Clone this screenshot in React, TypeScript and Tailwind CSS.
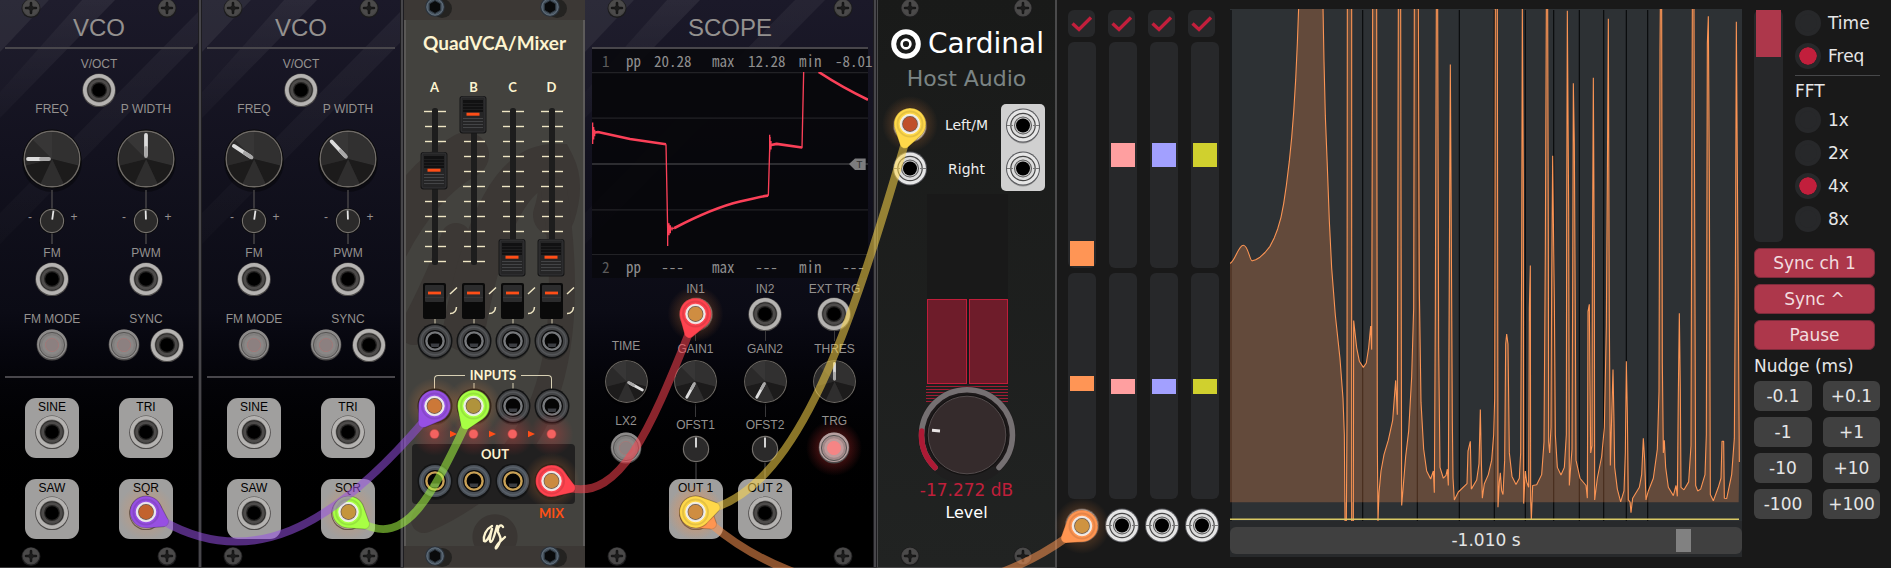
import React from "react";

/* ---------- shared hardware parts ---------- */

const Screw = () => (
  <svg width="20" height="20" viewBox="0 0 20 20" className="block shrink-0" aria-hidden="true">
    <circle cx="10" cy="10.5" r="9.5" fill="#1b1b1c" />
    <circle cx="10" cy="10" r="8.6" fill="#464545" />
    <circle cx="10" cy="9.6" r="7.6" fill="#4b4a4a" />
    <path d="M10 5v10M5 10h10" stroke="#161616" strokeWidth="2.6" strokeLinecap="round" />
    <circle cx="10" cy="10" r="2.6" fill="#1c1c1c" />
  </svg>
);

const Jack = () => (
  <svg width="34" height="34" viewBox="0 0 34 34" className="block shrink-0" aria-hidden="true">
    <circle cx="17" cy="17.4" r="16.8" fill="#4d4b4a" />
    <circle cx="17" cy="17" r="16" fill="#b5b3b1" />
    <circle cx="17" cy="17" r="12.4" fill="#787674" />
    <circle cx="17" cy="17" r="11.8" fill="#2a2928" />
    <circle cx="17" cy="17" r="10.8" fill="#4d4b4a" />
    <circle cx="17" cy="17" r="8" fill="#262524" />
    <circle cx="17" cy="17" r="6.8" fill="#000" />
  </svg>
);

const SilverJack = () => (
  <svg width="34" height="36" viewBox="0 0 34 36" className="block shrink-0" aria-hidden="true">
    <circle cx="17" cy="19.5" r="16" fill="#000" opacity=".28" />
    <circle cx="17" cy="17.5" r="17" fill="#55565a" />
    <circle cx="17" cy="17.5" r="16" fill="#e6e6e6" />
    <circle cx="17" cy="17.5" r="12.8" fill="#444" />
    <circle cx="17" cy="17.5" r="11.6" fill="#dcdcdc" />
    <path d="M1 17.5h6M27 17.5h6" stroke="#777" strokeWidth="1" />
    <circle cx="17" cy="17.5" r="9" fill="#555" />
    <circle cx="17" cy="17.5" r="8" fill="#c6c6c6" />
    <circle cx="17" cy="17.5" r="7" fill="#000" />
  </svg>
);

const MixJack = ({ gold, tick }: { gold?: boolean; tick?: boolean }) => (
  <svg width="36" height="36" viewBox="0 0 36 36" className="block overflow-visible" aria-hidden="true">
    {tick && <path d="M18 -5v6" stroke="#d8d0b4" strokeWidth="1" />}
    <circle cx="18" cy="20" r="17" fill="#000" opacity=".25" />
    <circle cx="18" cy="18" r="17.5" fill="#121314" />
    <circle cx="18" cy="18" r="16" fill={gold ? "#4a5058" : "#434446"} />
    <circle cx="18" cy="18" r="13.8" fill="none" stroke={gold ? "#59616a" : "#55575a"} strokeWidth="1.4" />
    <circle cx="18" cy="18" r="11" fill="#0c0c0d" />
    <circle cx="18" cy="18" r="8.6" fill="#050505" stroke={gold ? "#caa257" : "#77797c"} strokeWidth="2.4" />
    <path d="M13.5 20.5h9l-1 3.5h-7z" fill="#3b3d42" />
  </svg>
);

const WEDGES = [
  { d: "M0 0V-27A27 27 0 0 1 26 6.6Z", f: "#313030" },
  { d: "M0 0L26 6.6A27 27 0 0 1 11.5 24.4Z", f: "#1c1b1b" },
  { d: "M0 0L11.5 24.4A27 27 0 0 1 -11.5 24.4Z", f: "#2f2e2e" },
  { d: "M0 0L-11.5 24.4A27 27 0 0 1 -26 6.6Z", f: "#1c1b1b" },
  { d: "M0 0L-26 6.6A27 27 0 0 1 -19 -19Z", f: "#2b2a2a" },
  { d: "M0 0L-19 -19A27 27 0 0 1 0 -27Z", f: "#373636" },
];

const RangeOverlay = ({ name, vertical }: { name: string; vertical?: boolean }) => (
  <input
    type="range"
    aria-label={name}
    className={
      vertical
        ? "absolute inset-0 h-full w-full cursor-pointer opacity-0 [writing-mode:vertical-lr]"
        : "absolute inset-0 h-full w-full cursor-pointer opacity-0"
    }
  />
);

const Knob = ({ name, angle, size }: { name: string; angle: number; size: number }) => (
  <span className="relative block shrink-0">
    <svg width={size} height={size} viewBox="-30 -30 60 60" className="block overflow-visible" aria-hidden="true">
      <circle cx="0" cy="3" r="30" fill="#000" opacity=".35" />
      <circle r="29.4" fill="#080808" />
      <circle r="27.8" fill="#262525" stroke="#6e6a66" strokeWidth="1.4" />
      {WEDGES.map((w) => (
        <path key={w.d} d={w.d} fill={w.f} />
      ))}
      <g transform={`rotate(${angle})`}>
        <path d="M0 -24V-4.5" stroke="#dcdcdc" strokeWidth="3.8" strokeLinecap="round" />
        <path d="M0 -11V-3" stroke="#a9a8a8" strokeWidth="3.8" strokeLinecap="round" />
      </g>
    </svg>
    <RangeOverlay name={name} />
  </span>
);

const SmallDial = ({ angle, r, cy }: { angle: number; r: number; cy: number }) => (
  <g transform={`translate(14 ${cy})`}>
    <circle r={r + 0.8} fill="#0a0a0a" />
    <circle r={r - 0.4} fill="#2b2a2a" stroke="#76726e" strokeWidth="1.1" />
    <path d={`M0 ${-r + 1.5}V-1.5`} stroke="#e6e6e6" strokeWidth="1.8" transform={`rotate(${angle})`} />
  </g>
);

const RoundButton = ({ name, lit }: { name: string; lit?: boolean }) => (
  <button type="button" aria-label={name} className="block shrink-0 cursor-pointer">
    <svg width="32" height="32" viewBox="0 0 32 32" className="block overflow-visible" aria-hidden="true">
      {lit && <circle cx="16" cy="16" r="28" fill="url(#redGlow)" />}
      <circle cx="16" cy="16" r="15.4" fill="#4c4a4a" />
      <circle cx="16" cy="15.2" r="14.8" fill={lit ? "#b7a0a0" : "#8d8b8a"} />
      <circle cx="16" cy="16" r="12.6" fill={lit ? "#a08888" : "#807e7d"} stroke="#565453" strokeWidth="1" />
      <circle cx="16" cy="16" r="9.8" fill={lit ? "#bd9b9b" : "#8a8786"} />
      <circle cx="16" cy="16" r="6.6" fill={lit ? "#f58585" : "#8c8080"} stroke={lit ? "#f58585" : "#a07a79"} strokeWidth="1" />
    </svg>
  </button>
);

const Label = ({ children }: { children: React.ReactNode }) => (
  <span className="block h-4 text-center text-[12px] leading-4 whitespace-nowrap">{children}</span>
);

const Plate = ({ label }: { label: string }) => (
  <div className="flex h-[60px] w-[54px] flex-col items-center rounded-[11px] bg-[#a09f9e] pt-px">
    <span className="h-4 text-[12px] leading-4 whitespace-nowrap text-black">{label}</span>
    <Jack />
  </div>
);

const Stripes = () => (
  <svg className="pointer-events-none absolute inset-0 h-full w-full" aria-hidden="true">
    <defs>
      <linearGradient id="fadeDown" x1="0" y1="0" x2="0" y2="1">
        <stop offset="0" stopColor="#fff" stopOpacity=".07" />
        <stop offset="1" stopColor="#fff" stopOpacity=".02" />
      </linearGradient>
    </defs>
    <path d="M0 0H49L0 52Z" fill="#fff" opacity=".08" />
    <path d="M82 0H115L0 118V92Z" fill="url(#fadeDown)" />
    <path d="M82 0H49L0 52V92Z" fill="#fff" opacity=".02" />
    <path d="M210 0H240L0 244V213Z" fill="url(#fadeDown)" opacity=".7" />
  </svg>
);

const ScrewRow = ({ bottom }: { bottom?: boolean }) => (
  <div className={bottom ? "mt-auto flex h-[21px] items-start justify-between" : "flex h-[18px] items-end justify-between"}>
    <Screw />
    <Screw />
  </div>
);

/* ---------- VCO ---------- */

const Attenuator = ({ name, angle }: { name: string; angle: number }) => (
  <div className="flex justify-center gap-1 text-[12px]">
    <span className="mt-[19px] w-2 text-center leading-4">-</span>
    <span className="relative block">
      <svg width="28" height="54" viewBox="0 0 28 54" className="block" aria-hidden="true">
        <path d="M14 0v54" stroke="#4a4849" strokeWidth="1.4" />
        <SmallDial angle={angle} r={12} cy={31} />
      </svg>
      <RangeOverlay name={name} />
    </span>
    <span className="mt-[19px] w-2 text-center leading-4">+</span>
  </div>
);

const Vco = ({ freq, width }: { freq: number; width: number }) => (
  <section className="relative flex w-[202px] shrink-0 flex-col overflow-hidden border-b border-[#39383a] bg-linear-to-b from-[#1b1929] via-[#0b0b15] via-55% to-black to-95% font-['Liberation_Sans',sans-serif] text-[#94918f]">
    <Stripes />
    <div className="pointer-events-none absolute inset-y-0 right-0 w-[4px] border-x border-[#1d1c20] bg-[#47464a]" />
    <div className="relative flex grow flex-col pr-[9px] pl-[5px]">
      <div className="px-4"><ScrewRow /></div>
      <h2 className="h-5 text-center text-[24px] leading-5">VCO</h2>
      <div className="mt-[9px] h-[2px] bg-[#48464b]" />
      <div className="mt-[7px] flex flex-col items-center gap-px">
        <Label>V/OCT</Label>
        <Jack />
      </div>
      <div className="-mt-[6px] grid grid-cols-2 justify-items-center">
        <Label>FREQ</Label>
        <Label>P WIDTH</Label>
      </div>
      <div className="mt-3 grid grid-cols-2 justify-items-center">
        <Knob name="Frequency" angle={freq} size={60} />
        <Knob name="Pulse width" angle={width} size={60} />
      </div>
      <div className="mt-px grid grid-cols-2">
        <Attenuator name="FM amount" angle={8} />
        <Attenuator name="PWM amount" angle={-2} />
      </div>
      <div className="mt-px grid grid-cols-2 justify-items-center gap-y-px">
        <Label>FM</Label>
        <Label>PWM</Label>
        <Jack />
        <Jack />
      </div>
      <div className="mt-[15px] grid grid-cols-2 items-center justify-items-center gap-y-px">
        <Label>FM MODE</Label>
        <Label>SYNC</Label>
        <RoundButton name="FM mode" />
        <div className="flex items-center gap-[10px]">
          <RoundButton name="Sync mode" />
          <Jack />
        </div>
      </div>
      <div className="mt-[14px] h-[2px] bg-[#48464b]" />
      <div className="mt-5 grid grid-cols-2 justify-items-center gap-y-[21px]">
        <Plate label="SINE" />
        <Plate label="TRI" />
        <Plate label="SAW" />
        <Plate label="SQR" />
      </div>
      <div className="mt-auto px-4"><ScrewRow bottom /></div>
    </div>
  </section>
);

/* ---------- Quad VCA / Mixer ---------- */

const HexScrew = () => (
  <svg width="38" height="20" viewBox="-12 -10 38 20" className="block shrink-0 overflow-visible" aria-hidden="true">
    <ellipse cx="7" cy="1.5" rx="10" ry="9.5" fill="#242321" />
    <circle r="9.8" fill="#2b333c" />
    <circle r="8.2" fill="#4a5763" stroke="#64727f" strokeWidth="1" />
    <path d="M0 -6.4L5.6 -3.2V3.2L0 6.4L-5.6 3.2V-3.2Z" fill="#090a0b" stroke="#2c353e" strokeWidth="1" />
  </svg>
);

const FADER_TICKS = [0, 1, 2, 3, 4, 5, 6, 7, 8, 9, 10];

const MixFader = ({ name, capTop }: { name: string; capTop: number }) => (
  <div className="relative h-[181px]">
    <svg width="39" height="181" viewBox="0 0 39 181" className="block overflow-visible" aria-hidden="true">
      {FADER_TICKS.map((i) => (
        <path key={i} d={`M${i % 5 === 0 ? 9 : 10} ${15.5 + i * 15}h${i % 5 === 0 ? 22 : 21}`} stroke="#efe6c4" strokeWidth="1.4" />
      ))}
      <rect x="17" y="12" width="6" height="157" rx="2.5" fill="#1d1d1d" />
      <g transform={`translate(6 ${capTop})`}>
        <rect x="-.5" y="0" width="27" height="37.5" rx="3" fill="#161617" />
        <rect x="1" y="1" width="24" height="35" rx="2" fill="#252526" stroke="#39393b" strokeWidth=".8" />
        <rect x="3" y="4" width="20" height="12" fill="#111112" />
        <path d="M3 7.5h20M3 10.5h20M3 13.5h20" stroke="#1e1e1f" />
        <path d="M3 22.5h20M3 25.5h20M3 28.5h20M3 31.5h20" stroke="#434446" strokeWidth="1" />
        <rect x="6.5" y="16.7" width="13" height="3" fill="#ff4e17" />
      </g>
    </svg>
    <RangeOverlay name={name} vertical />
  </div>
);

const CurveSwitch = ({ name }: { name: string }) => (
  <button type="button" aria-label={name} className="block h-[48px] cursor-pointer">
    <svg width="39" height="48" viewBox="0 0 39 48" className="block overflow-visible" aria-hidden="true">
      <path d="M20 42v7" stroke="#d8d0b4" strokeWidth="1" />
      <rect x="8" y="6" width="23" height="36" rx="2" fill="#0a0a0a" />
      <rect x="10" y="8" width="19" height="17" rx="1" fill="#2c2c2d" />
      <path d="M10 20.5h19" stroke="#363637" />
      <rect x="13" y="14.6" width="13" height="2.8" fill="#ff4e17" />
      <path d="M35 17l7-6.5M35 36.5q6 .2 6.500-6.500" stroke="#efe6c4" strokeWidth="1.5" fill="none" />
    </svg>
  </button>
);

const Led = ({ arrow }: { arrow?: boolean }) => (
  <svg width="39" height="20" viewBox="0 0 39 20" className="block overflow-visible" aria-hidden="true">
    <circle cx="19.5" cy="10" r="22" fill="url(#redGlow)" opacity=".6" />
    <circle cx="19.5" cy="10" r="4.6" fill="#f46260" stroke="#b04442" strokeWidth=".6" />
    {arrow && <path d="M35 6.8L42 10L35 13.2Z" fill="#ff4e17" />}
  </svg>
);

const CHANNELS = [
  { name: "A", cap: 56 },
  { name: "B", cap: 0 },
  { name: "C", cap: 143 },
  { name: "D", cap: 143 },
];

const Mixer = () => (
  <section className="relative flex w-[181px] shrink-0 flex-col overflow-hidden border-b border-[#5a5652] bg-[#43423e] font-['Lato',sans-serif] font-bold text-[#fdf4d0]">
    <svg className="pointer-events-none absolute inset-0 h-full w-full" aria-hidden="true">
      <path d="M62 155Q8 185 -30 270" stroke="#3c3835" strokeWidth="46" fill="none" strokeLinecap="round" />
      <path d="M52 238Q32 290 10 330" stroke="#3c3835" strokeWidth="30" fill="none" strokeLinecap="round" />
      <path d="M60 330Q90 165 150 165Q160 185 150 215" stroke="#3c3835" strokeWidth="42" fill="none" strokeLinecap="round" />
      <path d="M150 190Q170 320 140 400T20 520" stroke="#3c3835" strokeWidth="26" fill="none" strokeLinecap="round" />
    </svg>
    <div className="pointer-events-none absolute inset-y-0 left-0 w-[2px] bg-[#5a5856]" />
    <div className="pointer-events-none absolute inset-y-0 right-0 w-[2px] bg-[#5d5b5a]" />
    <div className="relative flex h-5 justify-between bg-[#3c3835] pr-[9px] pl-[19px]">
      <div className="-mt-[3px]"><HexScrew /></div>
      <div className="-mt-[3px]"><HexScrew /></div>
    </div>
    <h2 className="relative mt-[11px] h-6 text-center text-[19px] leading-6">QuadVCA/Mixer</h2>
    <div className="relative mt-6 grid grid-cols-[repeat(4,39px)] pl-[11px] text-center text-[13px] leading-4">
      {CHANNELS.map((c) => <span key={c.name}>{c.name}</span>)}
    </div>
    <div className="relative mt-px grid grid-cols-[repeat(4,39px)] pl-[11px]">
      {CHANNELS.map((c) => <MixFader key={c.name} name={`Level ${c.name}`} capTop={c.cap} />)}
    </div>
    <div className="relative grid grid-cols-[repeat(4,39px)] pl-[11px]">
      {CHANNELS.map((c) => <CurveSwitch key={c.name} name={`Response ${c.name}`} />)}
    </div>
    <div className="relative -mt-[2px] grid grid-cols-[repeat(4,39px)] justify-items-center pl-[11px]">
      {CHANNELS.map((c) => <MixJack key={c.name} />)}
    </div>
    <div className="relative mt-2 flex h-[21px] gap-[5px] pr-[33px] pl-[30px] text-[13px] leading-4">
      <span className="mt-2 h-[14px] grow rounded-tl border-t border-l border-[#d8d0b4]" />
      INPUTS
      <span className="mt-2 h-[14px] grow rounded-tr border-t border-r border-[#d8d0b4]" />
    </div>
    <div className="relative grid grid-cols-[repeat(4,39px)] justify-items-center pl-[11px]">
      <MixJack />
      <MixJack tick />
      <MixJack tick />
      <MixJack />
    </div>
    <div className="relative z-10 grid grid-cols-[repeat(4,39px)] pl-[11px]">
      <Led arrow />
      <Led arrow />
      <Led arrow />
      <Led />
    </div>
    <div className="relative ml-2 h-[60px] w-[163px] rounded-[4px] bg-[#212020] pt-[2px] pl-[3px]">
      <span className="block h-4 text-center text-[13px] leading-4">OUT</span>
      <div className="mt-px grid grid-cols-[repeat(4,39px)] justify-items-center">
        <MixJack gold />
        <MixJack gold />
        <MixJack gold />
        <MixJack gold />
      </div>
    </div>
    <div className="relative mt-px grid grid-cols-[repeat(4,39px)] pl-[11px] text-center text-[13px] leading-4 text-[#ff5014]">
      <span className="col-start-4">MIX</span>
    </div>
    <div className="relative z-10 mt-auto flex h-[25px] items-end justify-center">
      <svg width="46" height="31" viewBox="0 0 46 31" className="block overflow-visible" aria-label="as">
        <path d="M2.500 31A22.500 22.500 0 1 1 43.500 31Z" fill="#3a3633" />
        <path
          d="M20 11C14 14 11 21 12 26C14 28 18 21 20 14C18 21 17 27 19 27C21 27 23 18 25 11M31 12C29 8 25 12 26 17C28 21 30 24 27 29C25 33 23 35 24 32C26 28 30 25 33 22"
          stroke="#fdf4d0" strokeWidth="2.400" fill="none" strokeLinecap="round" strokeLinejoin="round"
        />
      </svg>
    </div>
    <div className="relative flex h-[21px] justify-between bg-[#3c3835] pr-[9px] pl-[19px]">
      <HexScrew />
      <HexScrew />
    </div>
  </section>
);

/* ---------- Scope ---------- */

const Readout = ({ ch, pp, max, min }: { ch: string; pp: string; max: string; min: string }) => (
  <div className="grid h-[23px] grid-cols-[24px_28px_58px_36px_51px_36px_35px] items-center pl-[10px] font-['Noto_Sans_Mono_CJK_JP','Noto_Sans_Mono_CJK_SC','Liberation_Mono',monospace] text-[15px] leading-4 text-[#8f8e8e]">
    <span className="text-[#5c5b5c]">{ch}</span>
    <span>pp</span>
    <span className="w-[37px] text-center">{pp}</span>
    <span>max</span>
    <span className="w-[37px] text-center">{max}</span>
    <span>min</span>
    <span className="w-[37px] text-center">{min}</span>
  </div>
);

const ScopeKnob = ({ name, angle }: { name: string; angle: number }) => <Knob name={name} angle={angle} size={45} />;

const OffsetKnob = ({ name }: { name: string }) => (
  <span className="relative block">
    <svg width="28" height="46" viewBox="0 0 28 46" className="block" aria-hidden="true">
      <path d="M14 30v16" stroke="#3a393b" strokeWidth="1.4" />
      <SmallDial angle={0} r={13} cy={16} />
    </svg>
    <RangeOverlay name={name} />
  </span>
);

const Scope = () => (
  <section className="relative flex w-[292px] shrink-0 flex-col overflow-hidden border-b border-[#39383a] bg-linear-to-b from-[#1b1929] via-[#0b0b15] via-55% to-black to-95% font-['Liberation_Sans',sans-serif] text-[#94918f]">
    <Stripes />
    <div className="pointer-events-none absolute inset-y-0 right-0 w-[4px] border-x border-[#1d1c20] bg-[#47464a]" />
    <div className="relative flex grow flex-col">
      <div className="pr-[24px] pl-[22px]"><ScrewRow /></div>
      <h2 className="h-5 pr-[2px] text-center text-[24px] leading-5">SCOPE</h2>
      <div className="mt-[9px] ml-[7px] w-[276px] border-t-2 border-[#48464b] bg-[#09090d]/90">
        <Readout ch="1" pp="20.28" max="12.28" min="-8.01" />
        <svg viewBox="36 213 828 555" preserveAspectRatio="none" className="block h-[183px] w-full bg-[#06060a]/60">
          <path d="M36 215H864M36 353H864M36 492H864M36 631H864M36 767H864" stroke="#222226" strokeWidth="4" />
          <path d="M36 492H864" stroke="#353538" strokeWidth="4" />
          <g stroke="#fb4058" fill="none" strokeLinejoin="round">
            <path d="M38 366V431M41 380V418M44 388V408M263 670V741M267 672V708M271 678V702M276 682V694M569 403V455M573 422V448" strokeWidth="4" />
            <path d="M38 398L54 395L150 416L258 432M282 687Q400 625 480 606T565 588M570 435L590 431L666 442M716 213Q790 262 864 297" strokeWidth="8" />
            <path d="M258 432L263 690L282 687M565 588L570 410M666 444L671 213" strokeWidth="4" />
          </g>
          <path d="M807 492L825 475H857V510H825Z" fill="#7c7c7e" />
          <text x="829" y="503" fontSize="32" fill="#333" fontFamily="Liberation Mono, monospace">T</text>
        </svg>
        <Readout ch="2" pp="---" max="---" min="---" />
      </div>
      <div className="mt-[3px] grid grid-cols-[70px_69px_70px_69px] justify-items-center pl-[6px]">
        <div className="flex flex-col items-center pt-[57px]">
          <span className="text-[12px] leading-4">TIME</span>
          <div className="mt-[5px]"><ScopeKnob name="Time" angle={118} /></div>
          <span className="mt-[9px] text-[12px] leading-4">LX2</span>
          <div className="mt-[3px]"><RoundButton name="LX2" /></div>
        </div>
        {[1, 2].map((n) => (
          <div key={n} className="flex flex-col items-center">
            <Label>IN{n}</Label>
            <Jack />
            <span className="h-[10px] w-px bg-[#3a393b]" />
            <Label>GAIN{n}</Label>
            <div className="mt-[2px]"><ScopeKnob name={`Gain ${n}`} angle={209} /></div>
            <span className="h-[13px] w-px bg-[#3a393b]" />
            <Label>OFST{n}</Label>
            <OffsetKnob name={`Offset ${n}`} />
            <Plate label={`OUT ${n}`} />
          </div>
        ))}
        <div className="flex flex-col items-center">
          <Label>EXT TRG</Label>
          <Jack />
          <span className="h-[10px] w-px bg-[#3a393b]" />
          <Label>THRES</Label>
          <div className="mt-[2px]"><ScopeKnob name="Threshold" angle={0} /></div>
          <span className="mt-[9px] text-[12px] leading-4">TRG</span>
          <div className="mt-[3px]"><RoundButton name="Trigger" lit /></div>
        </div>
      </div>
      <div className="mt-auto pr-[24px] pl-[22px]"><ScrewRow bottom /></div>
    </div>
  </section>
);

/* ---------- Host audio ---------- */

const LevelKnob = () => (
  <div className="relative">
    <svg width="100" height="98" viewBox="0 0 100 98" className="block" aria-hidden="true">
      <path
        d="M9 2.5h82M9 5.5h82M9 8.5h82M9 11.5h82M9 14.5h82M9 17.5h82"
        stroke="#a01c34" strokeWidth="1.2"
      />
      <circle cx="50" cy="51" r="49" fill="#201b1c" opacity=".45" />
      <path d="M17 83A46 46 0 1 1 83 83Z" fill="#1d191a" />
      <path d="M18 83.5A45.5 45.5 0 1 1 82 83.5" stroke="#757072" strokeWidth="5.5" fill="none" strokeLinecap="round" />
      <path d="M18 83.5A45.5 45.5 0 0 1 4.7 47" stroke="#ad1a35" strokeWidth="5.5" fill="none" strokeLinecap="round" />
      <circle cx="50" cy="51" r="40.5" fill="#151313" />
      <circle cx="50" cy="51" r="38.8" fill="#352b2c" stroke="#544c4d" strokeWidth="1" />
      <path d="M15 46.3l8 .7" stroke="#e8e4e4" strokeWidth="3" />
    </svg>
    <RangeOverlay name="Level" />
  </div>
);

const HostAudio = () => (
  <section className="relative flex w-[180px] shrink-0 flex-col overflow-hidden border-r-2 border-b border-l border-[#4a4a4b] bg-linear-to-b from-[#191a19] to-[#212322] font-['DejaVu_Sans',sans-serif]">
    <div className="pr-[22px] pl-[22px]"><ScrewRow /></div>
    <div className="mt-[9px] flex h-[34px] items-center pl-[13px]">
      <svg width="30" height="30" viewBox="0 0 30 30" className="block shrink-0" aria-hidden="true">
        <circle cx="15" cy="15" r="12.3" fill="none" stroke="#fff" strokeWidth="5" />
        <circle cx="15" cy="15" r="4.4" fill="none" stroke="#fff" strokeWidth="2.6" />
      </svg>
      <h2 className="ml-[7px] text-[28px] leading-[34px] text-white">Cardinal</h2>
    </div>
    <p className="mt-[5px] text-center text-[22px] leading-[26px] text-[#7b8484]">Host Audio</p>
    <div className="mt-3 flex h-[87px] text-[14px] text-[#ededed]">
      <div className="flex w-[49px] flex-col justify-around pl-[15px]">
        <SilverJack />
        <SilverJack />
      </div>
      <div className="flex w-[74px] flex-col justify-around pl-[5px] text-center">
        <span>Left/M</span>
        <span>Right</span>
      </div>
      <div className="flex w-[44px] flex-col items-center justify-around rounded-[5px] bg-[#d0d0d0]">
        <SilverJack />
        <SilverJack />
      </div>
    </div>
    <div className="mt-[3px] ml-[49px] w-[81px] bg-[#191919] pt-[105px]">
      <div className="grid grid-cols-2 gap-[2px]">
        <span className="h-[85px] border border-[#c01d3a] bg-[#6e1c2a]" />
        <span className="h-[85px] border border-[#c01d3a] bg-[#6e1c2a]" />
      </div>
    </div>
    <div className="ml-[39px]"><LevelKnob /></div>
    <p className="-mt-[2px] text-center text-[17px] leading-5 text-[#c01f3b]">-17.272 dB</p>
    <p className="mt-[3px] text-center text-[16px] leading-5 text-white">Level</p>
    <div className="mt-auto pr-[22px] pl-[22px]"><ScrewRow bottom /></div>
  </section>
);

/* ---------- Analyser ---------- */

const TRACE_POINTS: number[][] = [
  [82, 720], [92, 717], [105, 710], [120, 697], [135, 680], [148, 656], [158, 632], [168, 600], [176, 562], [184, 512], [193, 445],
  [200, 380], [206, 310], [212, 220], [217, 120], [221, 20], [294, 20], [297, 170], [301, 320], [307, 460], [313, 610],
  [320, 740], [331, 870], [345, 990], [354, 1100], [358, 1200], [360, 1438], [364, 1438], [366, 1162], [367, 20], [380, 20],
  [380, 1438], [385, 1438], [386, 885], [389, 910], [395, 960], [403, 997], [415, 1014], [424, 1002], [431, 960], [437, 900],
  [440, 965], [443, 20], [455, 20], [457, 1230], [459, 1438], [462, 1360], [468, 1300], [477, 1255], [490, 1215], [503, 1160], [512, 1050],
  [517, 1145], [520, 20], [527, 20], [530, 1395], [535, 1340], [542, 1260], [551, 1190], [560, 1040], [566, 850], [568, 20],
  [580, 20], [583, 800], [588, 1110], [596, 1240], [605, 1300], [617, 1322], [625, 1300], [628, 1360], [631, 850], [634, 20],
  [638, 20], [641, 960], [645, 1290], [655, 1320], [663, 1312], [667, 1295], [670, 1340], [673, 740], [676, 178], [679, 665],
  [682, 1160], [684, 1320], [688, 1380], [700, 1358], [726, 1335], [729, 1245], [736, 1218], [739, 1350], [755, 1325],
  [762, 1280], [766, 1130], [769, 1270], [772, 1375], [778, 1335], [790, 1310], [800, 1270], [806, 1200], [809, 1100],
  [811, 20], [817, 20], [819, 1400], [823, 1330], [826, 1305], [830, 1355], [834, 1365], [839, 1270], [842, 950],
  [845, 922], [849, 950], [853, 1250], [861, 1315], [873, 1337], [883, 1320], [887, 1250], [890, 700], [892, 20],
  [895, 500], [896, 1390], [901, 1300], [905, 1330], [911, 1345], [913, 850], [916, 733], [917, 1380], [919, 1435],
  [923, 1340], [935, 1338], [950, 1310], [957, 1220], [961, 690], [964, 20], [968, 20], [970, 660], [971, 1220],
  [974, 1250], [978, 1180], [980, 780], [983, 430], [986, 680], [988, 825], [991, 1200], [997, 1290], [1008, 1311],
  [1018, 1290], [1024, 1200], [1025, 600], [1027, 30], [1031, 580], [1033, 1340], [1037, 1290], [1041, 1240], [1043, 800],
  [1045, 230], [1048, 400], [1051, 880], [1053, 1270], [1065, 1320], [1083, 1340], [1087, 1375], [1089, 860], [1093, 840],
  [1095, 1050], [1097, 1250], [1101, 1230], [1102, 790], [1105, 215], [1108, 740], [1109, 1380], [1117, 1320],
  [1130, 1260], [1138, 1180], [1144, 900], [1147, 500], [1150, 52], [1153, 880], [1156, 1285], [1160, 1150], [1164, 1020],
  [1167, 1165], [1169, 1290], [1177, 1350], [1187, 1385], [1197, 1355], [1201, 1250], [1204, 997], [1207, 1140],
  [1210, 1380], [1215, 1385], [1218, 1415], [1223, 1375], [1243, 1345], [1250, 1310], [1255, 1210], [1259, 1270],
  [1263, 1380], [1270, 1355], [1285, 1320], [1297, 1240], [1302, 1080], [1305, 140], [1306, 20], [1310, 20],
  [1312, 1000], [1315, 1250], [1318, 1215], [1322, 1290], [1330, 1345], [1345, 1368], [1353, 1340], [1357, 1370],
  [1360, 1085], [1363, 865], [1366, 1080], [1368, 1345], [1377, 1352], [1391, 1330], [1398, 1230], [1400, 600],
  [1402, 20], [1407, 20], [1409, 600], [1412, 1340], [1418, 1355], [1427, 1350], [1440, 1310], [1444, 1200], [1447, 120],
  [1450, 45], [1453, 480], [1456, 1365], [1465, 1382], [1480, 1345], [1488, 1320], [1491, 1218], [1496, 1218],
  [1498, 1375], [1505, 1376], [1520, 1310], [1528, 1210], [1531, 800], [1534, 60], [1537, 460], [1540, 860], [1543, 1275],
];
const BUMP = "M15 727C30 722 40 677 55 677C70 677 74 722 82 720";
const TRACE = BUMP + TRACE_POINTS.map(([x, y]) => `L${x} ${y}`).join("");
const GRID_LINES = [18, 413, 577, 703, 808, 901, 986, 1063, 1136, 1204, 1268];

const Spectrum = () => (
  <div className="flex min-w-0 grow flex-col bg-[#27292b]">
    <svg viewBox="15 25 1536 1413" preserveAspectRatio="none" className="block h-[512px] min-h-0 w-full grow bg-[#2d3134]" role="img" aria-label="Spectrum">
      <path d={GRID_LINES.map((x) => `M${x} 28V1438`).join("")} stroke="#090a0b" strokeWidth="3.5" />
      <path d={`${TRACE}L1541 1386H15Z`} fill="#ff9452" fillOpacity=".26" />
      <path d={TRACE} fill="none" stroke="#fb9454" strokeWidth="1.1" strokeLinejoin="bevel" vectorEffect="non-scaling-stroke" />
      <path d="M15 1433H1542" stroke="#d9c964" strokeWidth="4" />
    </svg>
    <div className="mt-[6px] mb-[3px] flex h-[27px]">
      <label className="relative flex grow items-center justify-center rounded-[6px] bg-[#404040] text-[#e4e4e4]">
        -1.010 s
        <span className="absolute top-[2px] right-[51px] h-[23px] w-[15px] bg-[#818181]" />
        <input type="range" className="absolute inset-0 h-full w-full cursor-pointer opacity-0" />
      </label>
    </div>
  </div>
);

const Strip = ({ name, offset, handle, color }: { name: string; offset: number; handle: number; color: string }) => (
  <div className="relative flex h-[226px] w-7 flex-col rounded-[6px] bg-[#27282a] px-[2px]">
    <div className={color} style={{ marginTop: offset, height: handle }} />
    <RangeOverlay name={name} vertical />
  </div>
);

const COLORS = ["bg-[#ff9555]", "bg-[#ff9fa0]", "bg-[#a2a0ff]", "bg-[#d0d02e]"];

const Check = ({ name }: { name: string }) => (
  <label className="relative block h-[27px] w-[27px] rounded-[6px] bg-[#27282a]">
    <input type="checkbox" defaultChecked aria-label={name} className="absolute inset-0 h-full w-full appearance-none" />
    <svg width="27" height="27" viewBox="0 0 27 27" className="pointer-events-none block" aria-hidden="true">
      <path d="M4.5 13.5L11 19.5L23 7.5" stroke="#c21f3c" strokeWidth="3.4" fill="none" />
    </svg>
  </label>
);

const Radio = ({ group, label, on }: { group: string; label: string; on?: boolean }) => (
  <label className="flex h-[26px] items-center gap-[7px] leading-5">
    <input
      type="radio"
      name={group}
      defaultChecked={on}
      className="h-[26px] w-[26px] shrink-0 appearance-none rounded-full border-4 border-[#27282a] bg-[#27282a] checked:bg-[#c21f3c] checked:bg-clip-padding"
    />
    {label}
  </label>
);

const RedButton = ({ children }: { children: React.ReactNode }) => (
  <button type="button" className="h-[30px] w-[121px] rounded-[6px] border border-[#7c2b3b] bg-[#ad374b] text-center leading-5 text-[#f2dcdf]">
    {children}
  </button>
);

const NUDGES = ["-0.1", "+0.1", "-1", "+1", "-10", "+10", "-100", "+100"];

const Analyser = () => (
  <section className="flex min-w-[600px] grow bg-[#191919] pt-[9px] pr-[11px] pb-[11px] pl-[11px] font-['DejaVu_Sans',sans-serif] text-[17px] text-[#e6e6e6]">
    <div className="flex w-[162px] shrink-0 flex-col">
      <div className="mt-px flex gap-[13px]">
        {COLORS.map((c, i) => <Check key={c} name={`Channel ${i + 1}`} />)}
      </div>
      <div className="mt-[5px] flex gap-[13px]">
        {COLORS.map((c, i) => (
          <Strip key={c} name={`Scale ${i + 1}`} offset={i === 0 ? 199 : 101} handle={i === 0 ? 25 : 24} color={c} />
        ))}
      </div>
      <div className="mt-[5px] flex gap-[13px]">
        {COLORS.map((c, i) => (
          <Strip key={c} name={`Offset ${i + 1}`} offset={i === 0 ? 103 : 106} handle={15} color={c} />
        ))}
      </div>
      <div className="mt-[9px] -ml-[3px] flex gap-[6px]">
        {COLORS.map((c) => <SilverJack key={c} />)}
      </div>
    </div>
    <Spectrum />
    <div className="ml-3 flex w-[126px] shrink-0 flex-col pt-px">
      <div className="flex gap-3">
        <div className="relative h-[232px] w-[29px] rounded-[6px] bg-[#27282a] px-[2px]">
          <div className="h-[47px] bg-[#ad374b]" />
          <RangeOverlay name="Trigger level" vertical />
        </div>
        <div className="flex grow flex-col">
          <Radio group="domain" label="Time" />
          <div className="mt-[7px]"><Radio group="domain" label="Freq" on /></div>
          <div className="mt-[6px] h-px bg-[#47484a]" />
          <span className="mt-[5px] leading-5">FFT</span>
          <div className="mt-[6px] flex flex-col gap-[7px]">
            <Radio group="fft" label="1x" />
            <Radio group="fft" label="2x" />
            <Radio group="fft" label="4x" on />
            <Radio group="fft" label="8x" />
          </div>
        </div>
      </div>
      <div className="mt-[6px] flex flex-col gap-[6px]">
        <RedButton>Sync ch 1</RedButton>
        <RedButton>Sync ^</RedButton>
        <RedButton>Pause</RedButton>
      </div>
      <span className="mt-[6px] leading-5 whitespace-nowrap">Nudge (ms)</span>
      <div className="mt-[5px] grid grid-cols-[58px_57px] gap-x-[11px] gap-y-[6px]">
        {NUDGES.map((n) => (
          <button key={n} type="button" className="h-[30px] rounded-[6px] bg-[#404040] text-center leading-5">
            {n}
          </button>
        ))}
      </div>
    </div>
  </section>
);

/* ---------- patch cables ---------- */

type PlugSpec = { x: number; y: number; a: number; body: string; core: string };

const PLUGS: PlugSpec[] = [
  { x: 146, y: 512, a: 29, body: "#9750e2", core: "#c2622e" },
  { x: 434.5, y: 406, a: 124, body: "#9750e2", core: "#cc7838" },
  { x: 348.5, y: 512, a: 37, body: "#a8ff45", core: "#c5953c" },
  { x: 473.5, y: 406, a: 112, body: "#a8ff45", core: "#b0933c" },
  { x: 551.5, y: 481, a: 20, body: "#ff434f", core: "#cb8a40" },
  { x: 695.5, y: 314, a: 108, body: "#ff434f", core: "#cf8d41" },
  { x: 695.5, y: 512, a: 37, body: "#ff9552", core: "#cf8d41" },
  { x: 695.5, y: 512, a: -13, body: "#ffd84a", core: "#cf8d41" },
  { x: 910, y: 124, a: 105, body: "#ffd84a", core: "#c04f2a" },
  { x: 1082, y: 526, a: 143, body: "#ff9552", core: "#cf9341" },
];

const CABLES = [
  { d: "M163 521C250 570 330 530 423 422", c: "#9850e6" },
  { d: "M364 524C405 545 430 500 466 424", c: "#a8ff45" },
  { d: "M570 488C620 500 650 430 689 333", c: "#ff434f" },
  { d: "M711 524C800 600 950 620 1066 538", c: "#ff9552" },
  { d: "M714 508C800 480 850 330 905 143", c: "#ffd84a" },
];

const Cables = () => (
  <svg width="1110" height="568" viewBox="0 0 1110 568" className="pointer-events-none absolute top-0 left-0 z-20" aria-hidden="true">
    <defs>
      <radialGradient id="redGlow">
        <stop offset="0" stopColor="#ff3a3a" stopOpacity=".5" />
        <stop offset="1" stopColor="#ff3a3a" stopOpacity="0" />
      </radialGradient>
      <radialGradient id="warmGlow">
        <stop offset="0" stopColor="#ff9040" stopOpacity=".4" />
        <stop offset="1" stopColor="#ff9040" stopOpacity="0" />
      </radialGradient>
    </defs>
    {PLUGS.map((p, i) => (
      <g key={i} transform={`translate(${p.x} ${p.y})`}>
        <circle r="28" fill="url(#warmGlow)" />
        <path
          transform={`rotate(${p.a})`}
          d="M8.8 -13.4L22.7 -4.2A5 5 0 0 1 22.7 4.2L8.8 13.4A16 16 0 1 1 8.8 -13.4Z"
          fill={p.body} stroke="#000" strokeOpacity=".25" strokeWidth="1"
        />
        <circle r="12.5" fill="none" stroke="#000" strokeOpacity=".1" strokeWidth="2" />
        <circle r="9.8" fill="#e9e6e4" stroke="#fff" strokeOpacity=".8" strokeWidth=".8" />
        <circle r="7.9" fill="#6b5a50" />
        <circle r="7.2" fill={p.core} />
      </g>
    ))}
    {CABLES.map((c) => (
      <path key={c.d} d={c.d} stroke={c.c} strokeOpacity=".54" strokeWidth="8" fill="none" strokeLinecap="round" />
    ))}
  </svg>
);

export default function App() {
  return (
    <main className="relative flex min-h-screen overflow-hidden bg-black">
      <Vco freq={-90} width={0} />
      <Vco freq={-57} width={-43} />
      <Mixer />
      <Scope />
      <HostAudio />
      <Analyser />
      <Cables />
    </main>
  );
}
